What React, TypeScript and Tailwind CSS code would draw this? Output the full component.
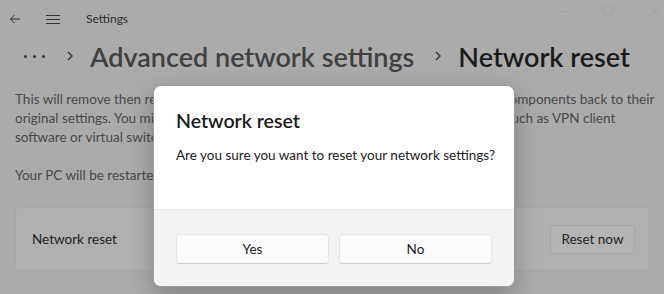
import React from "react";

const font = { fontFamily: 'Lato, "Noto Sans", sans-serif' };

export default function App() {
  return (
    <div className="relative w-[664px] h-[294px] overflow-hidden bg-[#ababab] text-[#1a1a1a]" style={font}>
      {/* title bar */}
      <div className="flex items-center h-[38px]">
        <div className="w-[21px] flex justify-end">
          <svg width="12" height="12" viewBox="0 0 12 12" fill="none" stroke="#333" strokeWidth="1">
            <path d="M11 6H1.5M5.5 2L1.5 6l4 4" />
          </svg>
        </div>
        <div className="ml-[25px] w-[14px]">
          <svg width="14" height="11" viewBox="0 0 14 11" fill="none" stroke="#333" strokeWidth="1">
            <path d="M0 1.5h14M0 5.5h14M0 9.5h14" />
          </svg>
        </div>
        <div className="ml-[26px] text-[12px] text-[#2e2e2e]">Settings</div>
        <div className="ml-auto self-start mt-[6px] flex items-center gap-[36px] pr-[5px]">
          <svg width="10" height="10" viewBox="0 0 10 10" stroke="#a0a0a0" strokeWidth="1"><path d="M0 5.5h10" /></svg>
          <svg width="10" height="10" viewBox="0 0 10 10" fill="none" stroke="#a0a0a0" strokeWidth="1"><rect x="0.5" y="0.5" width="9" height="9" rx="1" /></svg>
          <svg width="10" height="10" viewBox="0 0 10 10" stroke="#a0a0a0" strokeWidth="1"><path d="M0.5 0.5l9 9M9.5 0.5l-9 9" /></svg>
        </div>
      </div>

      {/* breadcrumb */}
      <div className="flex items-center h-[36px]">
        <div className="ml-[24px] flex gap-[6px]">
          <span className="block w-[3px] h-[3px] rounded-full bg-[#3a3a3a]" />
          <span className="block w-[3px] h-[3px] rounded-full bg-[#3a3a3a]" />
          <span className="block w-[3px] h-[3px] rounded-full bg-[#3a3a3a]" />
        </div>
        <svg className="ml-[21px]" width="8" height="12" viewBox="0 0 8 12" fill="none" stroke="#3a3a3a" strokeWidth="1.5">
          <path d="M2 2l4 4-4 4" />
        </svg>
        <div className="ml-[16px] text-[27px] font-semibold text-[#404040] whitespace-nowrap leading-none">Advanced network settings</div>
        <svg className="ml-[20px]" width="8" height="12" viewBox="0 0 8 12" fill="none" stroke="#3a3a3a" strokeWidth="1.5">
          <path d="M2 2l4 4-4 4" />
        </svg>
        <div className="ml-[16px] text-[27px] font-semibold text-[#1b1b1b] whitespace-nowrap leading-none">Network reset</div>
      </div>

      {/* body */}
      <div className="px-[15px] mt-[16px] text-[13.5px] leading-[19px] text-[#484848]">
        <p className="whitespace-nowrap">This will remove then reinstall all your network adapters, and set other networking components back to their</p>
        <p className="whitespace-nowrap">original settings. You might need to reinstall other networking software afterwards, such as VPN client</p>
        <p className="whitespace-nowrap">software or virtual switches.</p>
        <p className="mt-[19px] whitespace-nowrap">Your PC will be restarted.</p>
      </div>

      {/* card */}
      <div className="ml-[15px] mr-[14px] mt-[22px] h-[64px] rounded-[4px] border border-[#a6a6a6] bg-[#b0b0b0] flex items-center pl-[16px] pr-[14px]">
        <div className="text-[13.5px] text-[#222]">Network reset</div>
        <div className="ml-auto w-[85px] h-[29px] rounded-[4px] border border-[#a4a4a4] bg-[#b4b4b4] flex items-center justify-center text-[13.5px] text-[#262626]">
          Reset now
        </div>
      </div>

      {/* dialog */}
      <div className="absolute left-[153px] top-[85px] w-[362px] h-[202px] rounded-[8px] overflow-hidden bg-white border border-[#9a9a9a] shadow-[0_8px_24px_rgba(0,0,0,0.25)] flex flex-col">
        <div className="h-[123px] px-[22px] pt-[21px]">
          <div className="text-[19.5px] font-semibold leading-[28px] text-[#1a1a1a]">Network reset</div>
          <div className="mt-[10px] text-[13.5px] leading-[20px] text-[#1a1a1a] whitespace-nowrap">Are you sure you want to reset your network settings?</div>
        </div>
        <div className="flex-1 bg-[#f3f3f3] border-t border-[#e5e5e5] px-[22px] pt-[24px] flex gap-[10px]">
          <div className="flex-1 h-[30px] rounded-[4px] bg-[#fbfbfb] border border-[#e5e5e5] border-b-[#cccccc] flex items-center justify-center text-[13.5px] text-[#1a1a1a]">
            Yes
          </div>
          <div className="flex-1 h-[30px] rounded-[4px] bg-[#fbfbfb] border border-[#e5e5e5] border-b-[#cccccc] flex items-center justify-center text-[13.5px] text-[#1a1a1a]">
            No
          </div>
        </div>
      </div>
    </div>
  );
}
